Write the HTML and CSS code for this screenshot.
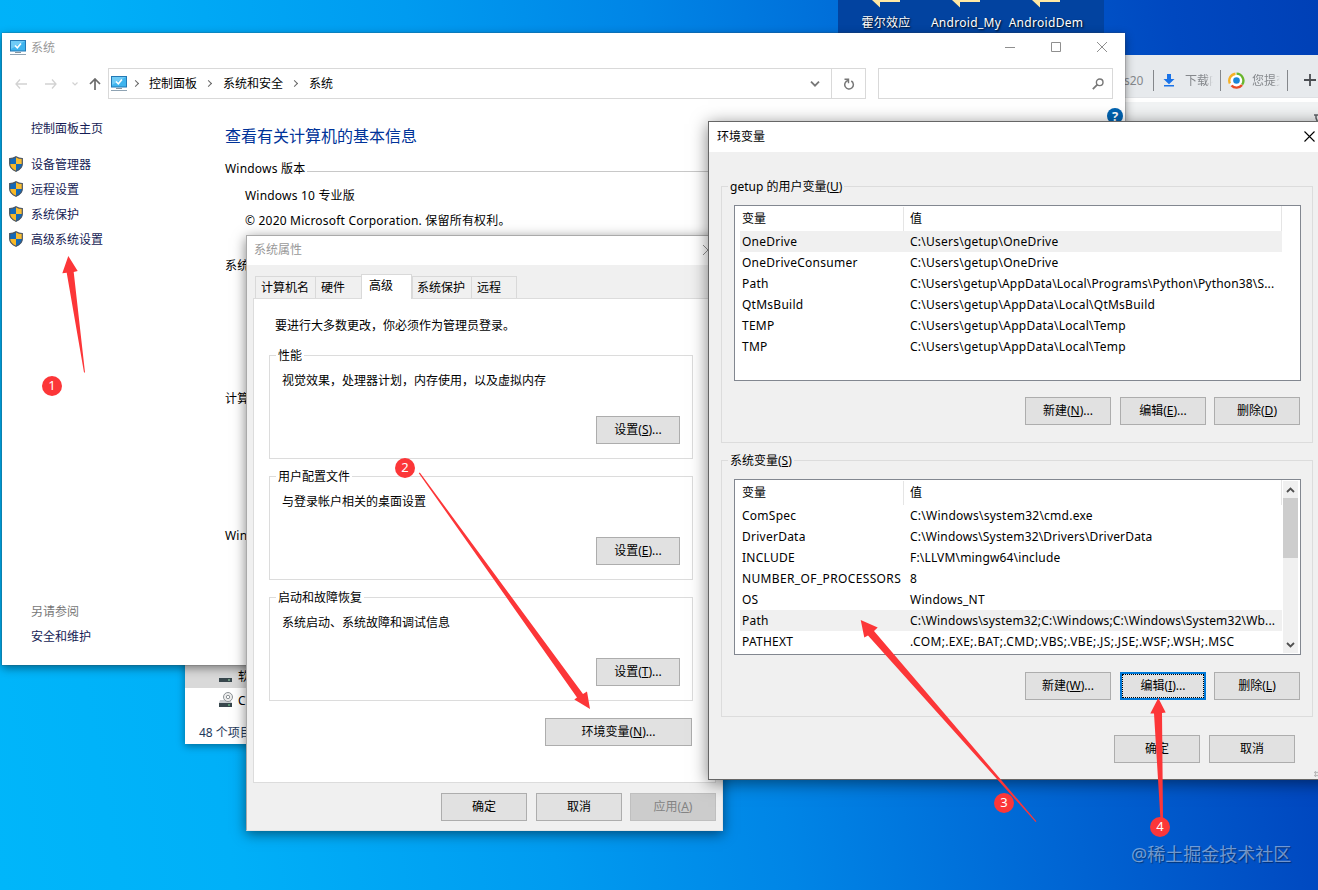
FILE: index.html
```
<!DOCTYPE html>
<html lang="zh-CN">
<head>
    <meta charset="utf-8">
    <title>环境变量</title>
    <link rel="stylesheet" href="styles.css">
</head>
<body>

<!-- shared icons -->
<svg class="defs">
    <symbol id="pc" viewBox="0 0 16 16">
        <rect x="0.5" y="0.5" width="15" height="10.5" fill="#3fb4ee" stroke="#2379b5"/>
        <path d="M1 1h14L1 9z" fill="#6fcbf6"/>
        <path d="M5 5.5l2.3 2.3L11 3.5" fill="none" stroke="#fff" stroke-width="1.6"/>
        <path d="M5 12.5h6" stroke="#8795a1" stroke-width="1"/>
        <path d="M0 14.5h16" stroke="#8fa3b3" stroke-width="1"/>
    </symbol>
    <symbol id="shield" viewBox="0 0 14 16">
        <path d="M7 0.5C5 2 3 2.4 0.6 2.4V8c0 3.8 3 6 6.4 7.5V8H0.6z" fill="#f8b826"/>
        <path d="M7 0.5C5 2 3 2.4 0.6 2.4V8H7z" fill="#1469b7"/>
        <path d="M7 0.5C9 2 11 2.4 13.4 2.4V8H7z" fill="#f9bd31"/>
        <path d="M13.4 8c0 3.8-3 6-6.4 7.5V8z" fill="#1469b7"/>
        <path d="M7 0.7C5 2 3 2.5 0.7 2.5V8c0 3.7 3 5.9 6.3 7.3C10.3 13.9 13.3 11.7 13.3 8V2.5C11 2.5 9 2 7 0.7z" fill="none" stroke="#4b5563" stroke-width="1.2"/>
    </symbol>
</svg>

<!-- Desktop -->
<div class="desktop-icons">
    <div class="desktop-icon">
        <svg width="28" height="8" viewBox="0 0 28 8"><path d="M0 0h28v2H8v5.5z" fill="#ffe8a4"/></svg>
        <span>霍尔效应</span>
    </div>
    <div class="desktop-icon">
        <svg width="28" height="8" viewBox="0 0 28 8"><path d="M0 0h28v2H8v5.5z" fill="#ffe8a4"/></svg>
        <span>Android_My</span>
    </div>
    <div class="desktop-icon">
        <svg width="28" height="8" viewBox="0 0 28 8"><path d="M0 0h28v2H8v5.5z" fill="#ffe8a4"/></svg>
        <span>AndroidDem</span>
    </div>
</div>

<!-- Browser behind -->
<div class="browser">
    <div class="browser-tabs">
        <span class="tab-end">s20</span>
        <span class="sep"></span>
        <svg class="tab-icon download" width="12" height="13" viewBox="0 0 12 13"><path d="M4 0h4v5h3.5L6 10.2.5 5H4zM1 11h10v1.6H1z" fill="#1a73e8"/></svg>
        <span class="tab-text">下载内</span>
        <span class="sep"></span>
        <svg class="tab-icon" width="17" height="17" viewBox="0 0 17 17">
            <circle cx="8.5" cy="8.5" r="7.5" fill="#fff"/>
            <g fill="none" stroke-width="2.4">
                <path d="M1.9 11.5A7 7 0 0 1 7.500 1.7" stroke="#f6b024"/>
                <path d="M8.5 1.6a7 7 0 0 1 5.6 11" stroke="#69b52d"/>
                <path d="M14 13a7 7 0 0 1-10.5.5" stroke="#e94b24"/>
            </g>
            <circle cx="8.5" cy="8.5" r="3.3" fill="#1a86d8"/>
        </svg>
        <span class="tab-text">您提交</span>
        <span class="sep"></span>
        <svg class="plus" width="12" height="12" viewBox="0 0 12 12"><path d="M6 0v12M0 6h12" stroke="#4a4d51" stroke-width="1.8"/></svg>
    </div>
    <div class="browser-bar"><svg width="8" height="12" viewBox="0 0 8 12"><path d="M2 3h6M4 3v3l2 5" stroke="#5f6368" fill="none" stroke-width="1.5"/></svg></div>
</div>

<!-- Explorer behind -->
<div class="explorer">
    <div class="tree-row selected">
        <svg width="16" height="16" viewBox="0 0 16 16"><path d="M2 7h10l2 3H1z" fill="#d5d8da"/><rect x="1" y="10" width="13" height="4" fill="#38474d"/><rect x="10" y="11.5" width="2" height="1" fill="#9fe3b0"/></svg>
        <span>软件</span>
    </div>
    <div class="tree-row">
        <svg width="16" height="16" viewBox="0 0 16 16"><path d="M2 8h10l2 3H1z" fill="#c8cccf"/><circle cx="10" cy="5" r="4.5" fill="#eee" stroke="#8c9296"/><circle cx="10" cy="5" r="1.7" fill="#fff" stroke="#8c9296"/><rect x="1" y="11" width="13" height="4" fill="#38474d"/><rect x="10" y="12.5" width="2" height="1" fill="#7fe39b"/></svg>
        <span>CD</span>
    </div>
    <div class="explorer-status">48 个项目</div>
</div>

<!-- System window -->
<div class="window system">
    <div class="titlebar">
        <svg width="16" height="16"><use href="#pc"/></svg>
        <span class="title">系统</span>
        <div class="win-buttons">
            <svg width="10" height="10" viewBox="0 0 10 10"><path d="M0 5.5h10" stroke="#8f8f8f"/></svg>
            <svg width="10" height="10" viewBox="0 0 10 10"><path d="M.5.5h9v9h-9z" fill="none" stroke="#8f8f8f"/></svg>
            <svg width="10" height="10" viewBox="0 0 10 10"><path d="M0 0l10 10M10 0L0 10" stroke="#8f8f8f"/></svg>
        </div>
    </div>
    <div class="navbar">
        <div class="nav-arrows">
            <svg width="12" height="10" viewBox="0 0 12 10"><path d="M5 .5L1 5l4 4.5M1 5h11" fill="none" stroke="#d2d2d2" stroke-width="1.3"/></svg>
            <svg width="12" height="10" viewBox="0 0 12 10"><path d="M7 .5L11 5 7 9.5M11 5H0" fill="none" stroke="#d2d2d2" stroke-width="1.3"/></svg>
            <svg width="6" height="4" viewBox="0 0 6 4"><path d="M.5.5L3 3 5.5.5" fill="none" stroke="#d2d2d2" stroke-width="1.2"/></svg>
            <svg width="12" height="12" viewBox="0 0 12 12"><path d="M1 6l5-5 5 5M6 1v11" fill="none" stroke="#6a6a6a" stroke-width="1.7"/></svg>
        </div>
        <div class="address">
            <svg width="16" height="16"><use href="#pc"/></svg>
            <i class="crumb-arrow"></i><span>控制面板</span>
            <i class="crumb-arrow"></i><span>系统和安全</span>
            <i class="crumb-arrow"></i><span>系统</span>
            <svg class="drop" width="10" height="6" viewBox="0 0 10 6"><path d="M1 .7l4 4 4-4" fill="none" stroke="#777" stroke-width="1.8"/></svg>
        </div>
        <div class="refresh">
            <svg width="12" height="12" viewBox="0 0 12 12"><path d="M1.500 1.200h4v4" fill="none" stroke="#777" stroke-width="1.400"/><path d="M5 2.500A4.300 4.300 0 1 0 8.300 3" fill="none" stroke="#777" stroke-width="1.500"/></svg>
        </div>
        <div class="search">
            <svg width="12" height="12" viewBox="0 0 12 12"><circle cx="7.7" cy="4.3" r="3.3" fill="none" stroke="#777" stroke-width="1.4"/><path d="M5.3 6.7L.8 11.2" stroke="#777" stroke-width="1.8"/></svg>
        </div>
    </div>
    <div class="system-body">
        <div class="sidebar">
            <a class="home">控制面板主页</a>
            <a><svg width="14" height="16"><use href="#shield"/></svg>设备管理器</a>
            <a><svg width="14" height="16"><use href="#shield"/></svg>远程设置</a>
            <a><svg width="14" height="16"><use href="#shield"/></svg>系统保护</a>
            <a><svg width="14" height="16"><use href="#shield"/></svg>高级系统设置</a>
            <div class="see-also">另请参阅</div>
            <a class="plain">安全和维护</a>
        </div>
        <div class="info">
            <h1>查看有关计算机的基本信息</h1>
            <div class="section-title"><span>Windows 版本</span></div>
            <p>Windows 10 专业版</p>
            <p>© 2020 Microsoft Corporation. 保留所有权利。</p>
            <div class="section-title s-system">系统</div>
            <div class="section-title s-computer">计算机名</div>
            <div class="section-title s-win">Windows 激活</div>
        </div>
        <div class="help">?</div>
    </div>
</div>

<!-- System properties -->
<div class="window props">
    <div class="titlebar">
        <span class="title">系统属性</span>
        <svg class="close" width="10" height="10" viewBox="0 0 10 10"><path d="M0 0l10 10M10 0L0 10" stroke="#8f8f8f"/></svg>
    </div>
    <div class="tabs">
        <div class="tab t1">计算机名</div>
        <div class="tab t2">硬件</div>
        <div class="tab t3 active">高级</div>
        <div class="tab t4">系统保护</div>
        <div class="tab t5">远程</div>
    </div>
    <div class="panel">
        <p class="intro">要进行大多数更改，你必须作为管理员登录。</p>
        <fieldset>
            <legend>性能</legend>
            <p>视觉效果，处理器计划，内存使用，以及虚拟内存</p>
            <button>设置(<u>S</u>)...</button>
        </fieldset>
        <fieldset>
            <legend>用户配置文件</legend>
            <p>与登录帐户相关的桌面设置</p>
            <button>设置(<u>E</u>)...</button>
        </fieldset>
        <fieldset>
            <legend>启动和故障恢复</legend>
            <p>系统启动、系统故障和调试信息</p>
            <button>设置(<u>T</u>)...</button>
        </fieldset>
        <button class="env-button">环境变量(<u>N</u>)...</button>
    </div>
    <div class="footer">
        <button>确定</button>
        <button>取消</button>
        <button disabled>应用(<u>A</u>)</button>
    </div>
</div>

<!-- Environment variables -->
<div class="window env">
    <div class="titlebar">
        <span class="title">环境变量</span>
        <svg class="close" width="11" height="11" viewBox="0 0 11 11"><path d="M.5.5l10 10M10.5.5l-10 10" stroke="#000" stroke-width="1.1"/></svg>
    </div>
    <fieldset class="user-vars">
        <legend>getup 的用户变量(<u>U</u>)</legend>
        <div class="list">
            <div class="list-head"><span>变量</span><span>值</span></div>
            <div class="row selected"><span>OneDrive</span><span>C:\Users\getup\OneDrive</span></div>
            <div class="row"><span>OneDriveConsumer</span><span>C:\Users\getup\OneDrive</span></div>
            <div class="row"><span>Path</span><span class="long">C:\Users\getup\AppData\Local\Programs\Python\Python38\S...</span></div>
            <div class="row"><span>QtMsBuild</span><span>C:\Users\getup\AppData\Local\QtMsBuild</span></div>
            <div class="row"><span>TEMP</span><span>C:\Users\getup\AppData\Local\Temp</span></div>
            <div class="row"><span>TMP</span><span>C:\Users\getup\AppData\Local\Temp</span></div>
        </div>
        <div class="buttons">
            <button>新建(<u>N</u>)...</button>
            <button>编辑(<u>E</u>)...</button>
            <button>删除(<u>D</u>)</button>
        </div>
    </fieldset>
    <fieldset class="system-vars">
        <legend>系统变量(<u>S</u>)</legend>
        <div class="list">
            <div class="list-head"><span>变量</span><span>值</span></div>
            <div class="row"><span>ComSpec</span><span>C:\Windows\system32\cmd.exe</span></div>
            <div class="row"><span>DriverData</span><span class="long">C:\Windows\System32\Drivers\DriverData</span></div>
            <div class="row"><span>INCLUDE</span><span class="long">F:\LLVM\mingw64\include</span></div>
            <div class="row"><span class="caps">NUMBER_OF_PROCESSORS</span><span>8</span></div>
            <div class="row"><span>OS</span><span>Windows_NT</span></div>
            <div class="row selected"><span>Path</span><span class="long">C:\Windows\system32;C:\Windows;C:\Windows\System32\Wb...</span></div>
            <div class="row"><span>PATHEXT</span><span class="caps">.COM;.EXE;.BAT;.CMD;.VBS;.VBE;.JS;.JSE;.WSF;.WSH;.MSC</span></div>
            <div class="scrollbar">
                <svg width="9" height="6" viewBox="0 0 9 6"><path d="M1 5l3.5-3.5L8 5" fill="none" stroke="#505050" stroke-width="1.8"/></svg>
                <div class="thumb"></div>
                <svg class="down" width="9" height="6" viewBox="0 0 9 6"><path d="M1 1l3.5 3.5L8 1" fill="none" stroke="#505050" stroke-width="1.8"/></svg>
            </div>
        </div>
        <div class="buttons">
            <button>新建(<u>W</u>)...</button>
            <button class="focused">编辑(<u>I</u>)...</button>
            <button>删除(<u>L</u>)</button>
        </div>
    </fieldset>
    <div class="footer">
        <button>确定</button>
        <button>取消</button>
    </div>
    <div class="grip"></div>
</div>

<!-- Step arrows -->
<svg class="arrows" width="1318" height="890" viewBox="0 0 1318 890">
    <g fill="#fc3638">
        <path d="M68.3 256L62.3 273.3L66.7 272.7L84 372.5H85L73.7 272L77.7 271z"/>
        <path d="M590 709L587 691.5L583 694L419.8 472.5L418.8 473.2L577 697.5L574.3 699.5z"/>
        <path d="M860.7 620L877.7 627.5L874 631L1036.400 821.200L1035.600 822L868 635.5L864.3 637.5z"/>
        <path d="M1158.3 698L1150.3 713.5L1154 713.5L1160.5 820H1163L1162 713L1165.7 712.5z"/>
    </g>
</svg>
<span class="step step1">1</span>
<span class="step step2">2</span>
<span class="step step3">3</span>
<span class="step step4">4</span>

<div class="watermark">@稀土掘金技术社区</div>

</body>
</html>
```

FILE: styles.css
```
* {
    box-sizing: border-box;
}
body {
    margin: 0;
    width: 1318px;
    height: 890px;
    overflow: hidden;
    position: relative;
    font-family: "Noto Sans", "Noto Sans CJK SC", sans-serif;
    font-size: 12px;
    line-height: 17px;
    color: #000;
    background: linear-gradient(80deg, #00b6fa 0%, #00b0f8 16%, #009bf0 38%, #0085e6 54%, #0066d4 72%, #0048c0 90%, #0040b6 100%);
}
svg {
    display: block;
    flex: none;
}
.defs {
    position: absolute;
    width: 0;
    height: 0;
}
p {
    margin: 0;
}
u {
    text-underline-offset: 1px;
}

/* Desktop icons */
.desktop-icons {
    position: absolute;
    left: 838px;
    top: 0;
    width: 266px;
    height: 40px;
    padding-left: 8px;
    display: flex;
    background: #0243a0;
    color: #fff;
    text-shadow: 1px 1px 2px #000;
}
.desktop-icon {
    width: 80px;
    display: flex;
    flex-direction: column;
    align-items: center;
    white-space: nowrap;
}
.desktop-icon svg {
    margin-bottom: 6px;
}
.desktop-icon span {
    letter-spacing: 0.3px;
}

/* Browser */
.browser {
    position: absolute;
    left: 1100px;
    top: 55px;
    width: 230px;
    height: 90px;
    background: #f1f3f4;
}
.browser-tabs {
    height: 43px;
    padding: 8px 0 0 24px;
    display: flex;
    align-items: center;
    background: #e7eaed;
    color: #85888c;
    border-bottom: 1px solid #dfe1e4;
}
.tab-end {
    width: 29px;
}
.sep {
    width: 1px;
    height: 21px;
    background: #84878b;
}
.tab-icon {
    margin-left: 7px;
}
.download {
    margin-left: 9px;
    margin-right: 3px;
}
.tab-text {
    width: 28px;
    margin-left: 7px;
    margin-right: 7px;
    overflow: hidden;
    white-space: nowrap;
    -webkit-mask-image: linear-gradient(90deg, #000 75%, transparent);
    mask-image: linear-gradient(90deg, #000 75%, transparent);
}
.plus {
    margin-left: 16px;
}
.browser-bar {
    height: 47px;
    border-top: 4px solid #fff;
    padding: 10px 0 0 212px;
}

/* Explorer */
.explorer {
    position: absolute;
    left: 185px;
    top: 640px;
    width: 120px;
    height: 104px;
    padding-top: 24px;
    background: #fff;
    box-shadow: 0 2px 8px rgba(0, 0, 0, 0.4);
}
.tree-row {
    height: 24px;
    padding-left: 33px;
    display: flex;
    align-items: center;
    gap: 4px;
}
.tree-row.selected {
    background: #d9d9d9;
}
.explorer-status {
    margin: 12px 0 0 14px;
    color: #1e395b;
}

/* Windows */
.window {
    position: absolute;
    background: #f0f0f0;
}
.titlebar {
    display: flex;
    align-items: center;
    background: #fff;
}
.title {
    color: #999;
}
.close {
    margin-left: auto;
}
button {
    display: block;
    width: 86px;
    height: 28px;
    padding: 0 0 2px;
    border: 1px solid #adadad;
    background: #e1e1e1;
    color: #000;
    font: inherit;
}
button:disabled {
    background: #ccc;
    border-color: #bfbfbf;
    color: #838383;
}
fieldset {
    margin: 0;
    padding: 0 6px;
    border: 1px solid #dcdcdc;
}
legend {
    padding: 0 2px;
    height: 17px;
}

/* System */
.system {
    left: 2px;
    top: 33px;
    width: 1123px;
    height: 632px;
    background: #fff;
    box-shadow: 0 0 1px #444, 0 3px 9px rgba(0, 0, 0, 0.45);
}
.system .titlebar {
    height: 29px;
    padding: 0 18px 0 8px;
    gap: 5px;
}
.win-buttons {
    margin-left: auto;
    padding-bottom: 1px;
    display: flex;
    gap: 36px;
}
.navbar {
    height: 32px;
    margin-top: 6px;
    display: flex;
}
.navbar > div {
    height: 31px;
    display: flex;
    align-items: center;
}
.nav-arrows {
    width: 106px;
    padding-left: 13px;
}
.nav-arrows svg:nth-child(2) {
    margin-left: 18px;
}
.nav-arrows svg:nth-child(3) {
    margin-left: 15px;
}
.nav-arrows svg:nth-child(4) {
    margin-left: 11px;
}
.address {
    width: 724px;
    padding: 0 11px 0 2px;
    border: 1px solid #d9d9d9;
}
.address span {
    padding-bottom: 1px;
}
.crumb-arrow {
    width: 5px;
    height: 5px;
    margin: 0 12px 0 9px;
    border: solid #666;
    border-width: 1.5px 1.5px 0 0;
    transform: rotate(45deg);
}
.address svg + .crumb-arrow {
    margin-left: 6px;
    margin-right: 11px;
}
.address .drop {
    margin-left: auto;
}
.refresh {
    width: 34px;
    justify-content: center;
    border: 1px solid #d9d9d9;
    border-left: 0;
}
.search {
    width: 235px;
    margin-left: 12px;
    padding-right: 8px;
    justify-content: flex-end;
    border: 1px solid #d9d9d9;
}
.system-body {
    display: flex;
    position: relative;
}
.sidebar {
    width: 223px;
    padding-top: 16px;
}
.sidebar a {
    height: 25px;
    padding-left: 7px;
    display: flex;
    align-items: center;
    gap: 8px;
    color: #151c55;
}
.sidebar a svg {
    margin-bottom: 2px;
}
.sidebar a.home {
    padding-left: 29px;
    margin-bottom: 11px;
}
.sidebar a.plain {
    padding-left: 29px;
}
.see-also {
    margin: 347px 0 4px 29px;
    padding-top: 4px;
    color: #777;
}
.info {
    flex: 1;
    padding-top: 24px;
    letter-spacing: 0.2px;
}
.info h1 {
    margin: 0;
    font-size: 16px;
    line-height: 24px;
    font-weight: normal;
    letter-spacing: 0;
    color: #003399;
}
.section-title {
    display: flex;
    align-items: center;
    margin: 12px 0 10px;
}
.section-title span {
    white-space: nowrap;
}
.section-title:nth-child(2)::after {
    content: "";
    flex: 1;
    height: 1px;
    margin: 6px 0 0 2px;
    background: #c8c8c8;
}
.info p {
    padding-left: 20px;
    margin-bottom: 8px;
}
.s-system {
    margin-top: 28px;
}
.s-computer {
    margin-top: 116px;
}
.s-win {
    margin-top: 120px;
}
.help {
    position: absolute;
    right: 2px;
    top: 8px;
    width: 16px;
    height: 16px;
    border-radius: 50%;
    background: #0063b1;
    color: #fff;
    font-size: 13px;
    font-weight: bold;
    line-height: 16px;
    text-align: center;
}

/* System properties */
.props {
    left: 246px;
    top: 235px;
    width: 477px;
    height: 596px;
    border: 1px solid #aaa;
    border-right-color: #e4e4e4;
    border-bottom-color: #e4e4e4;
    box-shadow: 0 3px 12px rgba(0, 0, 0, 0.5);
}
.props .titlebar {
    height: 29px;
    padding: 0 9px 2px 7px;
}
.tabs {
    display: flex;
    align-items: flex-end;
    height: 24px;
    margin: 9px 0 0 8px;
}
.tab {
    height: 22px;
    padding-top: 2px;
    border: 1px solid #d9d9d9;
    border-bottom: 0;
    border-right: 0;
    padding-left: 5px;
}
.t1 {
    width: 60px;
}
.t2 {
    width: 46px;
}
.t4 {
    width: 59px;
    padding-left: 4px;
}
.t5 {
    width: 46px;
    border-right: 1px solid #d9d9d9;
}
.tab.active {
    width: 51px;
    height: 25px;
    margin-bottom: -1px;
    padding-left: 7px;
    background: #fff;
    border-right: 1px solid #d9d9d9;
    position: relative;
}
.panel {
    width: 463px;
    height: 485px;
    margin-left: 6px;
    padding: 18px 22px 0 15px;
    background: #fff;
    border: 1px solid #dcdcdc;
}
.intro {
    margin: 0 0 13px 6px;
}
.panel fieldset {
    height: 112px;
    margin-bottom: 9px;
}
.panel fieldset p {
    margin: 8px 0 27px 6px;
}
.panel fieldset button {
    width: 84px;
    margin: 0 6px 0 auto;
}
.panel .env-button {
    width: 147px;
    margin: 17px 1px 0 auto;
}
.props .footer {
    display: flex;
    justify-content: flex-end;
    gap: 9px;
    padding: 10px 6px 0 0;
}
.props .footer button:last-child {
    margin-left: -1px;
}

/* Environment variables */
.env {
    left: 708px;
    top: 121px;
    width: 622px;
    height: 659px;
    border: 1px solid #666;
    box-shadow: 0 3px 16px rgba(0, 0, 0, 0.5);
}
.env .titlebar {
    height: 30px;
    padding: 0 14px 2px 8px;
}
.env .title {
    color: #000;
}
.env fieldset {
    width: 592px;
    height: 265px;
    margin-left: 12px;
}
.user-vars {
    margin-top: 26px;
    margin-bottom: 9px;
}
.list {
    position: relative;
    width: 567px;
    height: 176px;
    margin: 10px 0 16px 6px;
    border: 1px solid #828790;
    background: #fff;
}
.system-vars .list {
    margin-bottom: 17px;
}
.list-head, .row {
    display: grid;
    grid-template-columns: 168px 1fr;
    width: 542px;
    margin-left: 5px;
    padding-left: 2px;
    white-space: nowrap;
    align-items: center;
}
.list-head {
    height: 25px;
    border-right: 1px solid #e5e5e5;
}
.list-head span {
    line-height: 24px;
}
.list-head span:first-child {
    width: 162px;
    border-right: 1px solid #e5e5e5;
}
.row {
    height: 21px;
    letter-spacing: 0.25px;
}
.row .long {
    letter-spacing: 0.17px;
}
.row .caps {
    letter-spacing: 0.36px;
}
.row.selected {
    background: #f0f0f0;
}
.scrollbar {
    position: absolute;
    right: 2px;
    top: 1px;
    width: 15px;
    height: 172px;
    display: flex;
    flex-direction: column;
    align-items: center;
    padding: 6px 0 5px;
    background: #f0f0f0;
}
.thumb {
    width: 15px;
    height: 60px;
    margin-top: 5px;
    background: #cdcdcd;
}
.scrollbar .down {
    margin-top: auto;
}
.buttons {
    display: flex;
    justify-content: flex-end;
    gap: 9px;
    padding-right: 6px;
}
.buttons button:last-child {
    margin-left: -1px;
}
.focused {
    border: 2px solid #0078d7;
    outline: 1px dotted #000;
    outline-offset: -3px;
}
.env .footer {
    display: flex;
    gap: 9px;
    padding: 18px 0 0 405px;
}
.grip {
    position: absolute;
    left: 605px;
    bottom: 2px;
    width: 6px;
    height: 6px;
    background: radial-gradient(#bbb 1px, transparent 1.5px) 0 0 / 3px 3px;
}

/* Step markers */
.arrows {
    position: absolute;
    left: 0;
    top: 0;
}
.step {
    position: absolute;
    width: 20px;
    height: 20px;
    border-radius: 50%;
    background: #fc3638;
    color: #fff;
    font-size: 13px;
    line-height: 19px;
    text-align: center;
}
.step1 {
    left: 42px;
    top: 376px;
}
.step2 {
    left: 395px;
    top: 458px;
}
.step3 {
    left: 994px;
    top: 793px;
}
.step4 {
    left: 1150px;
    top: 817px;
}
.watermark {
    position: absolute;
    left: 1131px;
    top: 841px;
    font-size: 18px;
    line-height: 26px;
    color: rgba(255, 255, 255, 0.45);
    text-shadow: 1px 1px 1px rgba(0, 0, 0, 0.4);
    white-space: nowrap;
}
```
